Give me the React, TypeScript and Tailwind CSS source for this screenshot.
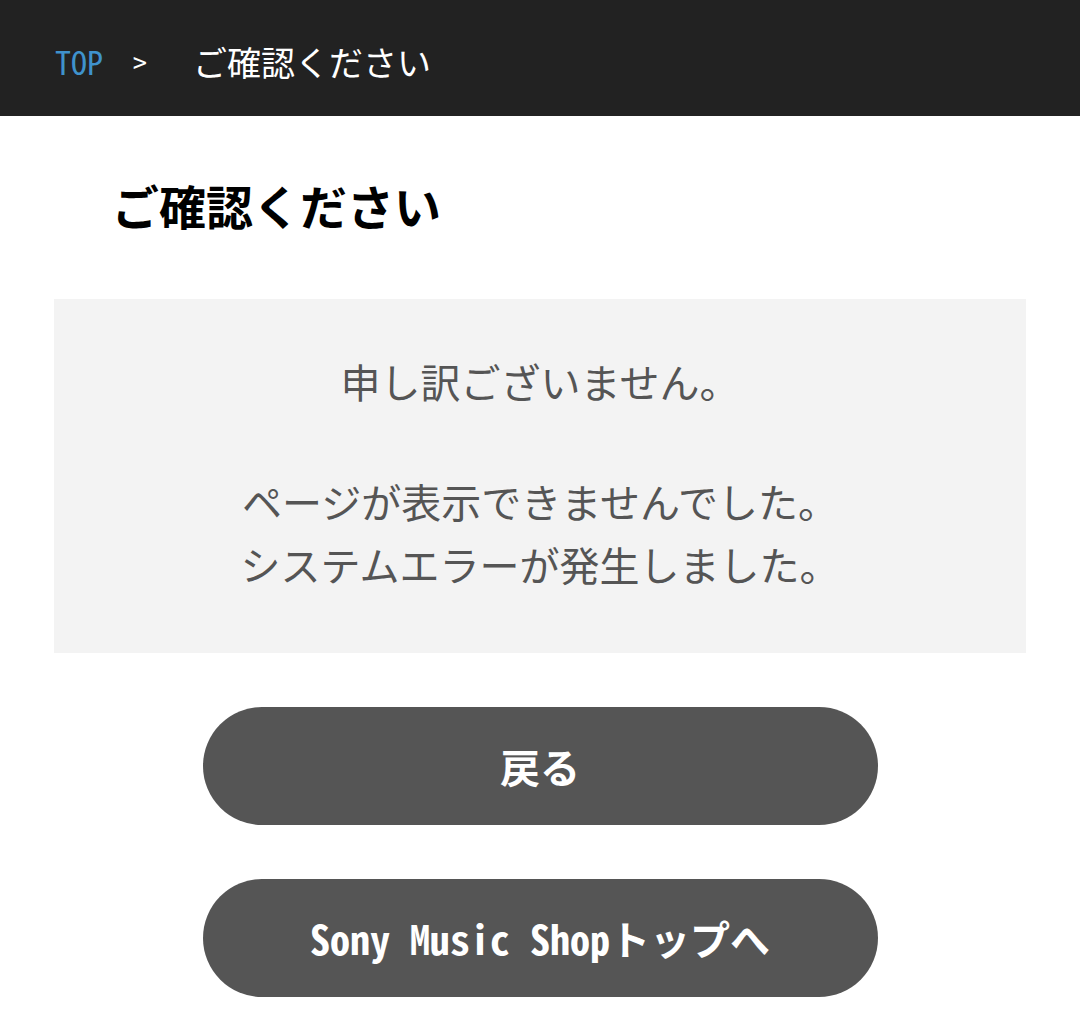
import React from "react";

const fontStack = {
  fontFamily: '"Noto Sans Mono CJK JP", "Noto Sans CJK JP", "DejaVu Sans Mono", monospace',
};

export default function App() {
  return (
    <div className="min-h-[1033px] bg-white" style={fontStack}>
      <nav className="flex h-[116px] items-center bg-[#222222] pl-[55px] pt-[6px] text-[32px]">
        <a href="#" className="text-[#3f92cc]">TOP</a>
        <span className="ml-[30px] text-[28px] text-white">&gt;</span>
        <span className="ml-[46px] text-[34px] text-white font-['Noto_Sans_CJK_JP',sans-serif]">ご確認ください</span>
      </nav>

      <main className="font-['Noto_Sans_CJK_JP',sans-serif]">
        <h1 className="pl-[112px] pt-[44px] text-[47px] font-bold leading-[90px] text-black">
          ご確認ください
        </h1>

        <div className="mx-[54px] mt-[49px] bg-[#f3f3f3] pt-[51px] pb-[57px] text-center text-[40px] leading-[63px] text-[#555555]">
          <p>申し訳ございません。</p>
          <p className="mt-[57px]">
            ページが表示できませんでした。
            <br />
            システムエラーが発生しました。
          </p>
        </div>

        <div className="mt-[54px] flex flex-col items-center gap-[54px]">
          <button className="h-[118px] w-[675px] rounded-full bg-[#555555] text-[40px] font-bold text-white">
            戻る
          </button>
          <button
            className="h-[118px] w-[675px] rounded-full bg-[#555555] text-[40px] font-bold text-white"
            style={fontStack}
          >
            Sony Music Shopトップへ
          </button>
        </div>
      </main>
    </div>
  );
}
